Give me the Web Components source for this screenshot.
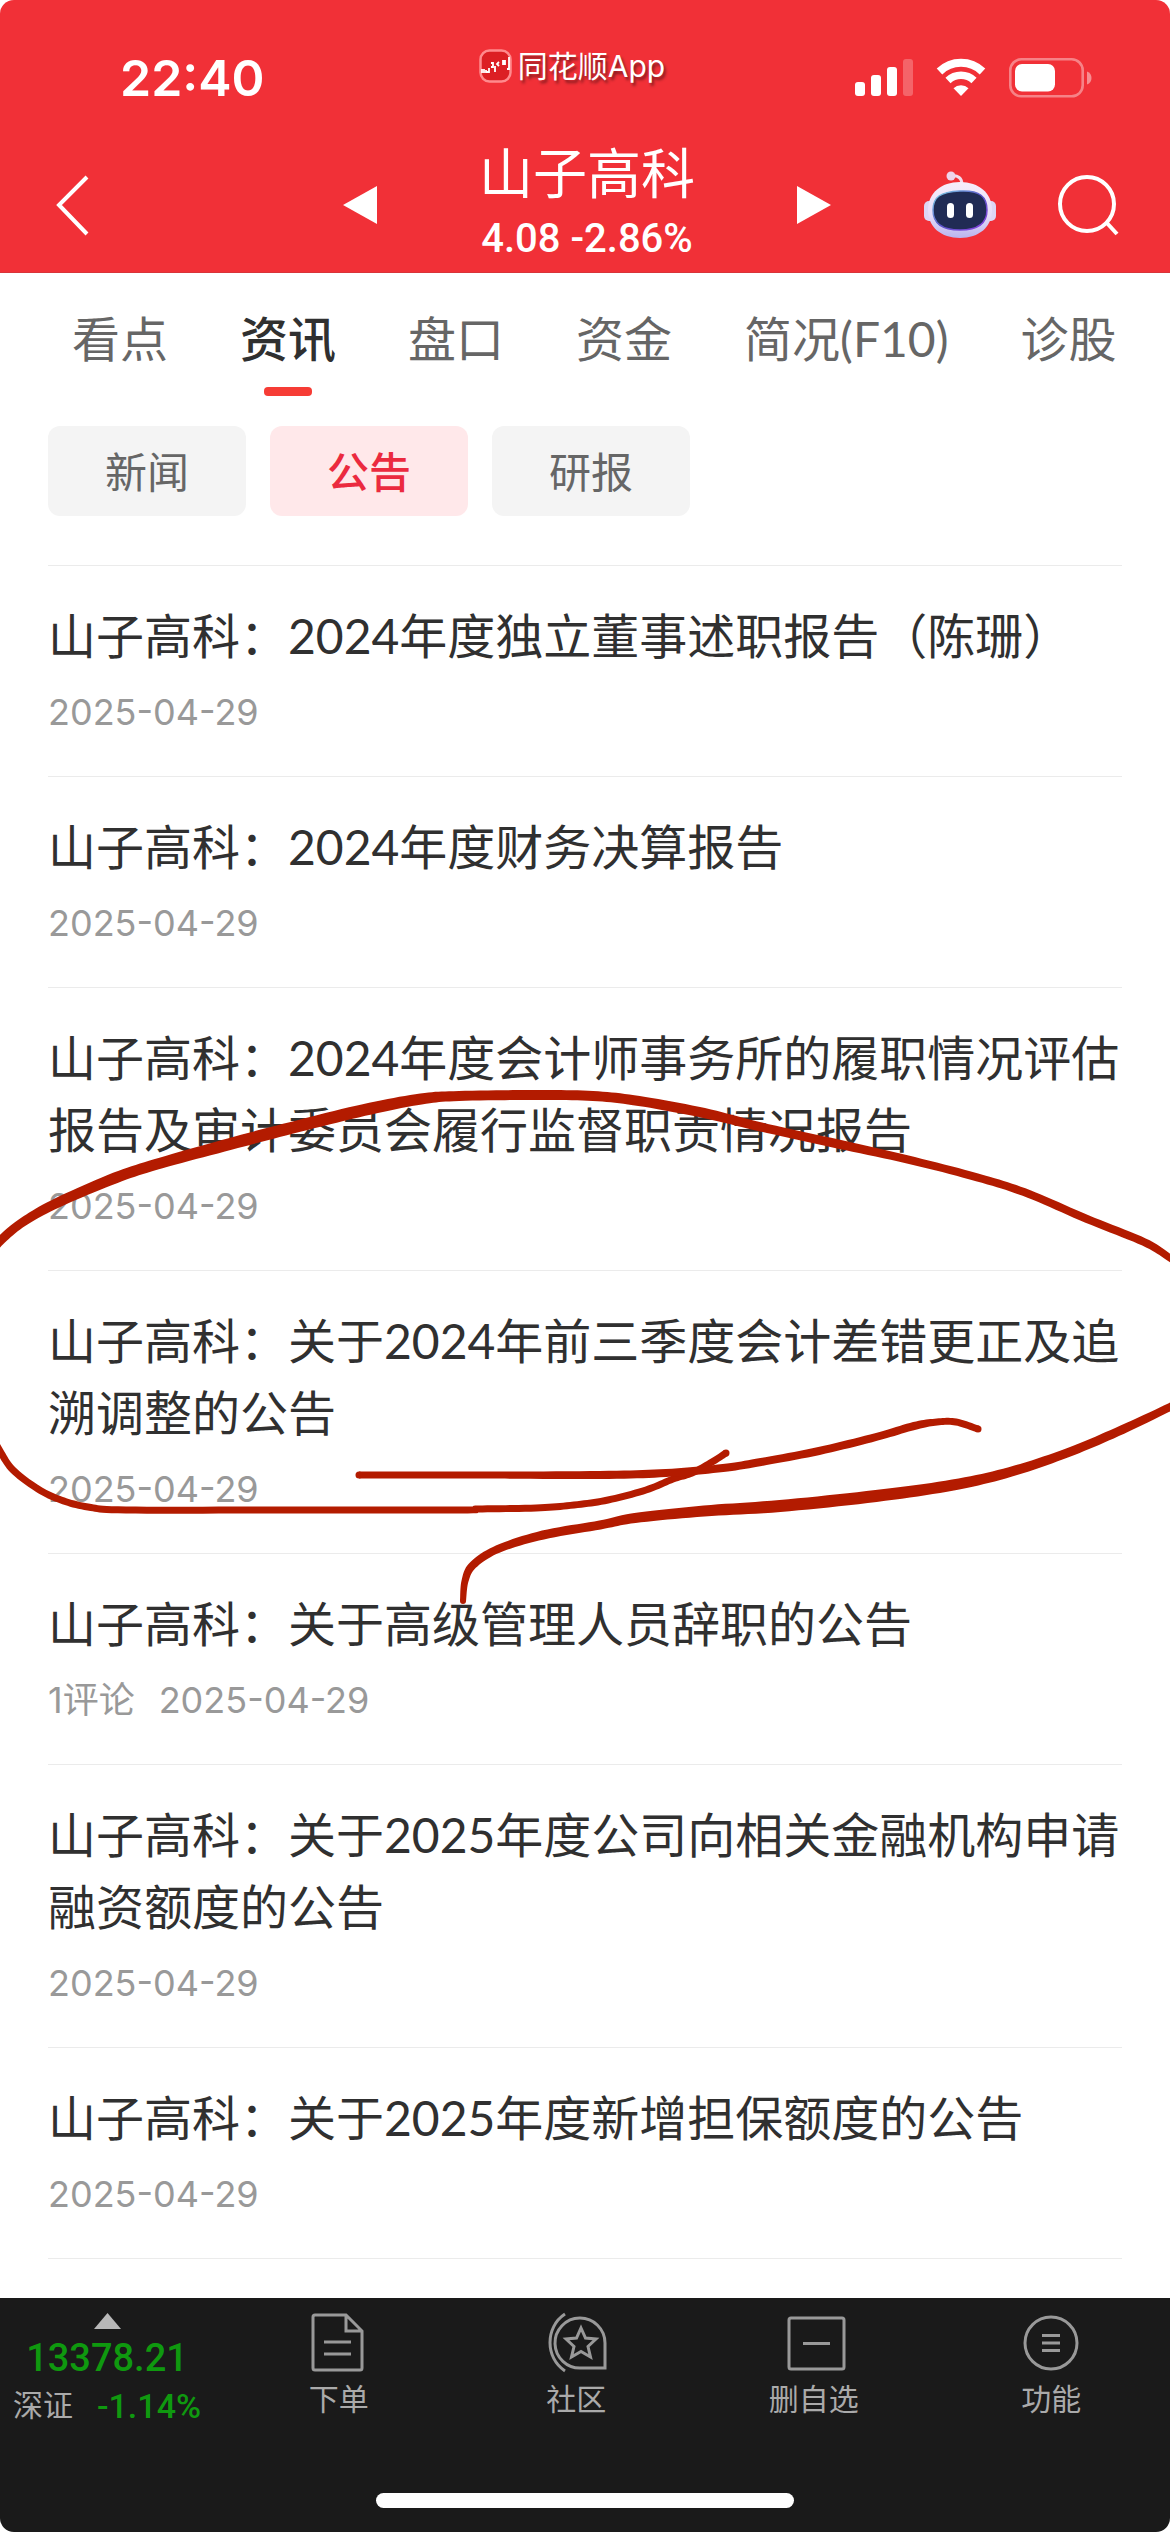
<!DOCTYPE html>
<html lang="zh-CN">
<head>
<meta charset="UTF-8">
<meta name="viewport" content="width=device-width, initial-scale=1">
<title>山子高科</title>
<style>
    body {
        margin: 0;
        background: #fff;
        font-family: Inter, "Noto Sans CJK SC", sans-serif;
    }
</style>
</head>
<body>
<stock-page>
    <status-bar slot="top" time="22:40"></status-bar>
    <stock-header slot="top" name="山子高科" price="4.08" change="-2.86%"></stock-header>

    <tab-bar>
        <tab-item>看点</tab-item>
        <tab-item active>资讯</tab-item>
        <tab-item>盘口</tab-item>
        <tab-item>资金</tab-item>
        <tab-item>简况(F10)</tab-item>
        <tab-item>诊股</tab-item>
    </tab-bar>

    <chip-bar>
        <chip-item>新闻</chip-item>
        <chip-item active>公告</chip-item>
        <chip-item>研报</chip-item>
    </chip-bar>

    <notice-list>
        <notice-item date="2025-04-29">山子高科：2024年度独立董事述职报告（陈珊）</notice-item>
        <notice-item date="2025-04-29">山子高科：2024年度财务决算报告</notice-item>
        <notice-item date="2025-04-29">山子高科：2024年度会计师事务所的履职情况评估报告及审计委员会履行监督职责情况报告</notice-item>
        <notice-item date="2025-04-29">山子高科：关于2024年前三季度会计差错更正及追溯调整的公告</notice-item>
        <notice-item date="2025-04-29" comments="1评论">山子高科：关于高级管理人员辞职的公告</notice-item>
        <notice-item date="2025-04-29">山子高科：关于2025年度公司向相关金融机构申请融资额度的公告</notice-item>
        <notice-item date="2025-04-29">山子高科：关于2025年度新增担保额度的公告</notice-item>
    </notice-list>

    <bottom-bar slot="bottom">
        <index-quote slot="quote" value="13378.21" name="深证" change="-1.14%"></index-quote>
        <nav-item icon="order">下单</nav-item>
        <nav-item icon="community">社区</nav-item>
        <nav-item icon="remove">删自选</nav-item>
        <nav-item icon="menu">功能</nav-item>
    </bottom-bar>

    <ink-layer slot="ink"></ink-layer>
</stock-page>

<script>
// -------------------------------------------------
// <stock-page>: page frame
// -------------------------------------------------
class StockPage extends HTMLElement {
    constructor() {
        super();
        this.attachShadow({ mode: "open" });
        this.shadowRoot.innerHTML = `
    <style>
    :host {
        display: flex;
        flex-direction: column;
        position: relative;
        min-height: 100vh;
        overflow: hidden;
        border-radius: 14px;
    }
    header {
        background: #f13037;
        border-bottom: 1px solid #d8343a;
    }
    main { flex: 1; padding-bottom: 39px; }
    </style>
    <header><slot name="top"></slot></header>
    <main><slot></slot></main>
    <slot name="bottom"></slot>
    <slot name="ink"></slot>
    `;
    }
}

// -------------------------------------------------
// <status-bar>: clock, app tag, signal, wifi, battery
// -------------------------------------------------
class StatusBar extends HTMLElement {
    constructor() {
        super();
        this.attachShadow({ mode: "open" });
        this.shadowRoot.innerHTML = `
    <style>
    :host {
        display: grid;
        grid-template-columns: 1fr auto 1fr;
        height: 134px;
        padding: 0 78px 0 120px;
        color: #fff;
        box-sizing: border-box;
    }
    time {
        font-size: 50px;
        font-weight: 600;
        line-height: 60px;
        padding-top: 48px;
    }
    .app {
        display: flex;
        align-items: center;
        gap: 6px;
        height: 36px;
        padding-top: 48px;
        padding-right: 68px;
        font-size: 30px;
        line-height: 36px;
        text-shadow: 2px 3px 3px rgba(0, 0, 0, 0.45);
    }
    .icons {
        display: flex;
        justify-content: flex-end;
        align-items: flex-start;
        gap: 23px;
        padding-top: 58px;
    }
    svg { display: block; }
    </style>
    <time></time>
    <div class="app">
        <svg width="33" height="34" viewBox="0 0 33 34">
            <rect x="1.5" y="1.5" width="30" height="31" rx="9" fill="#dc1f24" stroke="#ff8a8d" stroke-width="2.5"/>
            <path d="M3 20v4M5 20v4M7 21v2h3v-4M12 14h2v4h-2M16 17v6M20 13l-2 2 2 2M24 11v5M26 11v5M25 11v5M30 8v12h-2" stroke="#fff" stroke-width="1.8" fill="none"/>
        </svg>
        <span>同花顺App</span>
    </div>
    <div class="icons">
        <svg width="58" height="38" viewBox="0 0 58 38" fill="#fff">
            <rect x="0" y="24" width="10" height="14" rx="3"/>
            <rect x="16" y="17" width="10" height="21" rx="3"/>
            <rect x="32" y="9" width="10" height="29" rx="3"/>
            <rect x="48" y="1" width="10" height="37" rx="3" opacity=".25"/>
        </svg>
        <svg width="50" height="38" viewBox="0 0 50 38">
            <path d="M3.500 13.500a31 31 0 0 1 43 0" fill="none" stroke="#fff" stroke-width="8"/>
            <path d="M12 22.500a19 19 0 0 1 26 0" fill="none" stroke="#fff" stroke-width="7.500"/>
            <path d="M25 38l-7.500-7.700a11 11 0 0 1 15 0z" fill="#fff"/>
        </svg>
        <svg width="83" height="40" viewBox="0 0 83 40">
            <rect x="1.300" y="1.300" width="72.400" height="37" rx="11" fill="none" stroke="#fff" stroke-opacity=".4" stroke-width="2.600"/>
            <rect x="6" y="6" width="40" height="27.500" rx="7" fill="#fff"/>
            <path d="M78 13.500c6 2 6 11 0 13z" fill="#fff" opacity=".45"/>
        </svg>
    </div>
    `;
    }

    connectedCallback() {
        this.shadowRoot.querySelector("time").textContent = this.getAttribute("time");
    }
}

// -------------------------------------------------
// <stock-header>: back, previous / next stock, tools
// -------------------------------------------------
class StockHeader extends HTMLElement {
    constructor() {
        super();
        this.attachShadow({ mode: "open" });
        this.shadowRoot.innerHTML = `
    <style>
    :host {
        display: grid;
        grid-template-columns: 1fr auto 1fr;
        align-items: center;
        height: 134px;
        padding: 4px 50px 0 54px;
        color: #fff;
    }
    button {
        display: block;
        padding: 0;
        border: 0;
        background: none;
        cursor: pointer;
    }
    svg { display: block; }
    .center { display: flex; align-items: center; gap: 102px; }
    .stock { padding-bottom: 4px; text-align: center; }
    h1 {
        margin: 0;
        font-size: 54px;
        font-weight: 400;
        line-height: 72px;
    }
    .quote {
        font-family: Roboto, sans-serif;
        font-size: 40px;
        font-weight: 500;
        line-height: 56px;
    }
    .tools { display: flex; justify-content: flex-end; align-items: center; gap: 60px; }
    </style>
    <button aria-label="返回">
        <svg width="36" height="62" viewBox="0 0 36 62"><path d="M33 3L5 31l28 29" fill="none" stroke="#fff" stroke-width="4"/></svg>
    </button>
    <div class="center">
        <button aria-label="上一只"><svg width="34" height="38" viewBox="0 0 34 38"><path d="M0 19L34 0v38z" fill="#fff"/></svg></button>
        <div class="stock">
            <h1></h1>
            <div class="quote"></div>
        </div>
        <button aria-label="下一只"><svg width="34" height="38" viewBox="0 0 34 38"><path d="M34 19L0 0v38z" fill="#fff"/></svg></button>
    </div>
    <div class="tools">
        <button aria-label="智能助手">
            <svg width="72" height="68" viewBox="0 0 72 68">
                <defs>
                    <linearGradient id="shell" x1="0" y1="0" x2="0" y2="1">
                        <stop offset="0" stop-color="#f7eefb"/><stop offset=".6" stop-color="#e6dcf8"/><stop offset="1" stop-color="#b9b4ee"/>
                    </linearGradient>
                    <linearGradient id="rim" x1="0" y1="0" x2="1" y2="1">
                        <stop offset="0" stop-color="#7fd6e6"/><stop offset=".5" stop-color="#5a55c8"/><stop offset="1" stop-color="#8b3fe0"/>
                    </linearGradient>
                </defs>
                <path d="M27 5c7-1 11 2 11 9" fill="none" stroke="#f3dcec" stroke-width="3"/>
                <circle cx="27" cy="5" r="4.500" fill="#eed3ea"/>
                <rect x="0" y="30" width="12" height="20" rx="5" fill="#ddd6f5"/>
                <rect x="60" y="30" width="12" height="20" rx="5" fill="#ddd6f5"/>
                <path d="M36 11c19 0 32 11 32 28S55 67 36 67 4 56 4 39s13-28 32-28z" fill="url(#shell)"/>
                <path d="M36 20c20-1 27 6 27 19s-8 20-27 20S9 52 9 39s7-18 27-19z" fill="#202b54" stroke="url(#rim)" stroke-width="1.500"/>
                <rect x="23" y="32" width="7" height="15" rx="3.500" fill="#fff"/>
                <rect x="42" y="32" width="7" height="15" rx="3.500" fill="#fff"/>
            </svg>
        </button>
        <button aria-label="搜索">
            <svg width="64" height="62" viewBox="0 0 64 62"><circle cx="31" cy="30" r="27" fill="none" stroke="#fff" stroke-width="4"/><path d="M50 48l11 12" stroke="#fff" stroke-width="4"/></svg>
        </button>
    </div>
    `;
    }

    connectedCallback() {
        const s = this.shadowRoot;
        s.querySelector("h1").textContent = this.getAttribute("name");
        s.querySelector(".quote").textContent = `${this.getAttribute("price")} ${this.getAttribute("change")}`;
    }
}

// -------------------------------------------------
// <tab-bar> / <tab-item>
// -------------------------------------------------
class TabBar extends HTMLElement {
    constructor() {
        super();
        this.attachShadow({ mode: "open" });
        this.shadowRoot.innerHTML = `
    <style>
    :host { display: block; }
    nav {
        display: flex;
        gap: 72px;
        padding: 30px 0 30px 72px;
        overflow: hidden;
    }
    </style>
    <nav><slot></slot></nav>
    `;
    }
}

class TabItem extends HTMLElement {
    constructor() {
        super();
        this.attachShadow({ mode: "open" });
        this.shadowRoot.innerHTML = `
    <style>
    :host { display: block; flex-shrink: 0; }
    a {
        display: flex;
        flex-direction: column;
        align-items: center;
        gap: 12px;
        color: #666;
        font-family: Lato, "Noto Sans CJK SC", sans-serif;
        font-size: 48px;
        line-height: 72px;
        text-decoration: none;
        white-space: nowrap;
    }
    a::after {
        content: "";
        width: 48px;
        height: 9px;
        border-radius: 4px;
    }
    :host([active]) a { color: #303030; font-weight: 500; }
    :host([active]) a::after { background: #f63c35; }
    </style>
    <a href="#"><span><slot></slot></span></a>
    `;
    }
}

// -------------------------------------------------
// <chip-bar> / <chip-item>
// -------------------------------------------------
class ChipBar extends HTMLElement {
    constructor() {
        super();
        this.attachShadow({ mode: "open" });
        this.shadowRoot.innerHTML = `
    <style>
    :host { display: flex; gap: 24px; padding: 0 48px; }
    </style>
    <slot></slot>
    `;
    }
}

class ChipItem extends HTMLElement {
    constructor() {
        super();
        this.attachShadow({ mode: "open" });
        this.shadowRoot.innerHTML = `
    <style>
    :host { display: block; }
    button {
        display: block;
        width: 198px;
        height: 90px;
        padding: 0 0 4px;
        border: 0;
        border-radius: 12px;
        background: #f4f4f4;
        color: #666;
        font: inherit;
        font-size: 42px;
        cursor: pointer;
    }
    :host([active]) button { background: #ffe8ea; color: #eb2a3f; font-weight: 500; }
    </style>
    <button><slot></slot></button>
    `;
    }
}

// -------------------------------------------------
// <notice-list> / <notice-item>
// -------------------------------------------------
class NoticeList extends HTMLElement {
    constructor() {
        super();
        this.attachShadow({ mode: "open" });
        this.shadowRoot.innerHTML = `
    <style>
    :host {
        display: block;
        margin: 49px 48px 0;
        border-top: 1px solid #ebebeb;
    }
    </style>
    <slot></slot>
    `;
    }
}

class NoticeItem extends HTMLElement {
    constructor() {
        super();
        this.attachShadow({ mode: "open" });
        this.shadowRoot.innerHTML = `
    <style>
    :host { display: block; border-bottom: 1px solid #ebebeb; }
    a {
        display: flex;
        flex-direction: column;
        gap: 20px;
        padding: 34px 0 44px;
        color: #303030;
        text-decoration: none;
    }
    .title {
        font-family: Lato, "Noto Sans CJK SC", sans-serif;
        font-size: 48px;
        line-height: 72px;
    }
    .meta {
        display: flex;
        gap: 24px;
        color: #999;
        font-size: 36px;
        line-height: 40px;
    }
    </style>
    <a href="#">
        <span class="title"><slot></slot></span>
        <span class="meta"></span>
    </a>
    `;
    }

    connectedCallback() {
        const meta = this.shadowRoot.querySelector(".meta");
        [this.getAttribute("comments"), this.getAttribute("date")].forEach(text => {
            if (!text) return;
            const span = document.createElement("span");
            span.textContent = text;
            meta.appendChild(span);
        });
    }
}

// -------------------------------------------------
// <bottom-bar>: index quote, actions, home indicator
// -------------------------------------------------
class BottomBar extends HTMLElement {
    constructor() {
        super();
        this.attachShadow({ mode: "open" });
        this.shadowRoot.innerHTML = `
    <style>
    :host {
        display: flex;
        flex-direction: column;
        justify-content: space-between;
        height: 234px;
        background: #1a1a1a;
    }
    nav {
        display: grid;
        grid-template-columns: 220px repeat(4, 1fr);
        padding-top: 14px;
    }
    .home {
        align-self: center;
        width: 418px;
        height: 15px;
        margin-bottom: 24px;
        border-radius: 8px;
        background: #fff;
    }
    </style>
    <nav><slot name="quote"></slot><slot></slot></nav>
    <div class="home"></div>
    `;
    }
}

class IndexQuote extends HTMLElement {
    constructor() {
        super();
        this.attachShadow({ mode: "open" });
        this.shadowRoot.innerHTML = `
    <style>
    :host {
        display: flex;
        flex-direction: column;
        align-items: center;
        padding-right: 6px;
        color: #0f990f;
        font-family: Roboto, "Noto Sans CJK SC", sans-serif;
        font-weight: 500;
    }
    svg { display: block; }
    .value { font-size: 38px; line-height: 56px; }
    .row {
        display: flex;
        align-items: center;
        gap: 24px;
        font-size: 34px;
        line-height: 40px;
    }
    .name { color: #aaa; font-size: 30px; font-weight: 400; }
    </style>
    <svg width="27" height="18" viewBox="0 0 27 18"><path d="M13.500 1L27 17H0z" fill="#b8b8b8"/></svg>
    <div class="value"></div>
    <div class="row"><span class="name"></span><span class="change"></span></div>
    `;
    }

    connectedCallback() {
        ["value", "name", "change"].forEach(key => {
            this.shadowRoot.querySelector("." + key).textContent = this.getAttribute(key);
        });
    }
}

const ICONS = {
    order: `<path d="M38 3H7a2 2 0 0 0-2 2v51a2 2 0 0 0 2 2h45a2 2 0 0 0 2-2V19zM38 3v16h16M16 30h27M16 42h27"/>`,
    community: `<path d="M20 2C0 15 0 46 20 59M60 56H36a25 25 0 1 1 24-25z"/><path d="M36 16l4.500 10 10.500 1-8 7.500 2.500 10.500-9.500-5.500-9.500 5.500L29 34.500 21 27l10.500-1z"/>`,
    remove: `<rect x="6" y="6" width="55" height="51" rx="2"/><path d="M20 31.500h27"/>`,
    menu: `<circle cx="31" cy="31" r="26"/><path d="M22 23.500h18M22 31h18M22 38.500h18"/>`
};

class NavItem extends HTMLElement {
    constructor() {
        super();
        this.attachShadow({ mode: "open" });
        this.shadowRoot.innerHTML = `
    <style>
    :host { display: block; }
    button {
        display: flex;
        flex-direction: column;
        align-items: center;
        gap: 5px;
        width: 100%;
        padding: 0;
        border: 0;
        background: none;
        color: #aaa;
        font: inherit;
        font-size: 30px;
        line-height: 40px;
        cursor: pointer;
    }
    svg { display: block; fill: none; stroke: #999; stroke-width: 3; overflow: visible; }
    </style>
    <button>
        <svg width="62" height="62" viewBox="0 0 62 62"></svg>
        <span><slot></slot></span>
    </button>
    `;
    }

    connectedCallback() {
        this.shadowRoot.querySelector("svg").innerHTML = ICONS[this.getAttribute("icon")];
    }
}

// -------------------------------------------------
// <ink-layer>: hand-drawn marks over the list
// each point is [x, y, pen width]
// -------------------------------------------------
const STROKES = [
    [[1190,1272,7],[1170,1258,7],[1144,1242,8],[1087,1219,8],[1029,1194,8],[983,1179,8],[914,1161,8],[838,1144,9],[761,1127,9],[704,1113,10],[639,1101,10],[593,1096,10],[536,1095,10],[459,1096,10],[421,1099,11],[364,1110,12],[291,1128,12],[230,1144,12],[161,1163,11],[115,1178,11],[57,1203,10],[23,1222,9],[0,1241,9],[-12,1256,9]],
    [[-10,1432,7],[0,1451,7],[13,1470,7],[38,1489,7],[61,1500,7],[88,1507,7],[126,1510,7],[268,1510,7],[459,1510,7],[478,1509,7],[536,1508,7],[574,1505,7],[608,1500,7],[646,1490,7],[673,1479,7],[692,1473,7],[712,1462,7],[726,1453,7]],
    [[359,1475,7],[480,1475,7],[600,1475,8],[666,1473,8],[723,1468,8],[761,1462,8],[819,1451,8],[876,1437,8],[914,1426,8],[937,1422,7],[956,1422,7],[978,1429,7]],
    [[463,1601,6],[465,1581,7],[473,1565,8],[498,1549,8],[543,1535,9],[600,1525,9],[635,1518,10],[704,1511,11],[780,1506,12],[876,1496,12],[953,1485,11],[1010,1472,10],[1067,1453,9],[1117,1432,9],[1170,1407,8],[1190,1396,8]]
];

class InkLayer extends HTMLElement {
    constructor() {
        super();
        this.attachShadow({ mode: "open" });
        this.shadowRoot.innerHTML = `
    <style>
    :host {
        position: absolute;
        inset: 0;
        pointer-events: none;
    }
    svg { display: block; width: 100%; fill: #b31b00; }
    </style>
    <svg viewBox="0 0 1170 2532" aria-hidden="true"></svg>
    `;
    }

    connectedCallback() {
        this.shadowRoot.querySelector("svg").innerHTML = STROKES.map(p => this.outline(this.smooth(p))).join("");
    }

    // smooth curve through the points
    smooth(points) {
        const steps = 10;
        const out = [points[0]];
        for (let i = 0; i < points.length - 1; i++) {
            const a = points[Math.max(i - 1, 0)];
            const b = points[i];
            const c = points[i + 1];
            const d = points[Math.min(i + 2, points.length - 1)];
            for (let n = 1; n <= steps; n++) {
                const t = n / steps;
                out.push(b.map((v, k) => 0.5 * (2 * v + (c[k] - a[k]) * t
                    + (2 * a[k] - 5 * v + 4 * c[k] - d[k]) * t * t
                    + (3 * v - a[k] - 3 * c[k] + d[k]) * t * t * t)));
            }
        }
        return out;
    }

    // both edges of the pen line as one filled shape, with round ends
    outline(curve) {
        const left = [];
        const right = [];
        curve.forEach(([x, y, w], i) => {
            const p = curve[Math.max(i - 1, 0)];
            const q = curve[Math.min(i + 1, curve.length - 1)];
            const len = Math.hypot(q[0] - p[0], q[1] - p[1]) || 1;
            const nx = -(q[1] - p[1]) / len * w / 2;
            const ny = (q[0] - p[0]) / len * w / 2;
            left.push(`${x + nx} ${y + ny}`);
            right.unshift(`${x - nx} ${y - ny}`);
        });
        const ends = [curve[0], curve[curve.length - 1]]
            .map(([x, y, w]) => `<circle cx="${x}" cy="${y}" r="${w / 2}"/>`).join("");
        return `<path d="M${left.concat(right).join("L")}Z"/>${ends}`;
    }
}

customElements.define("stock-page", StockPage);
customElements.define("status-bar", StatusBar);
customElements.define("stock-header", StockHeader);
customElements.define("tab-bar", TabBar);
customElements.define("tab-item", TabItem);
customElements.define("chip-bar", ChipBar);
customElements.define("chip-item", ChipItem);
customElements.define("notice-list", NoticeList);
customElements.define("notice-item", NoticeItem);
customElements.define("bottom-bar", BottomBar);
customElements.define("index-quote", IndexQuote);
customElements.define("nav-item", NavItem);
customElements.define("ink-layer", InkLayer);
</script>
</body>
</html>
